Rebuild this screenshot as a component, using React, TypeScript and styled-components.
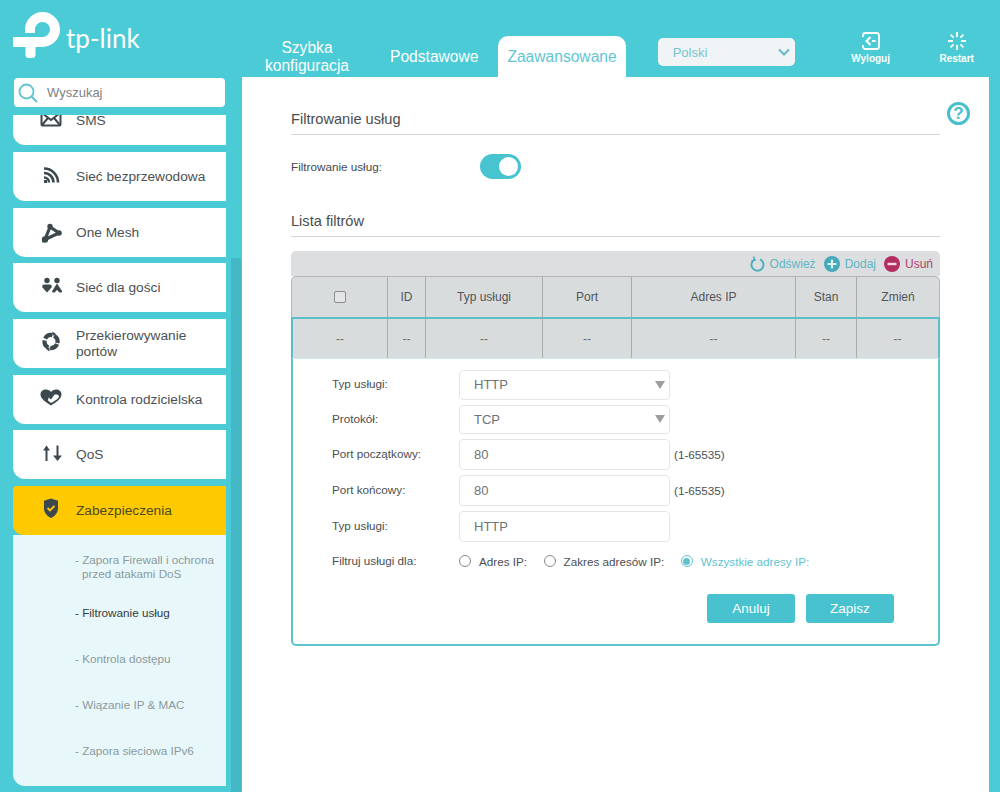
import React from 'react';
import styled, { createGlobalStyle } from 'styled-components';

const TEAL = '#4acbd6';
const DARK = '#3d484e';

const GlobalStyle = createGlobalStyle`
  html, body {
    margin: 0;
    padding: 0;
    background: ${TEAL};
    font-family: "Liberation Sans", Arial, sans-serif;
  }
  * { box-sizing: border-box; }
`;

const Page = styled.div`
  width: 1000px;
  height: 792px;
  overflow: hidden;
  background: ${TEAL};
`;

/* top bar */
const Header = styled.header`
  display: flex;
  height: 77px;
`;

const LogoArea = styled.div`
  align-items: flex-start;
  display: flex;
  flex: 0 0 244px;
  padding: 5px 0 0 12px;
`;

const LogoMark = styled.svg`
  display: block;
  flex: none;
`;

const LogoText = styled.span`
  color: #fff;
  font-family: Lato, sans-serif;
  font-size: 26px;
  line-height: 36px;
  margin: 15px 0 0 4px;
`;

const Nav = styled.nav`
  align-items: flex-end;
  display: flex;
  gap: 11px;
`;

const Tab = styled.div<{ $active?: boolean; $wide?: boolean }>`
  align-items: center;
  background: ${(p) => (p.$active ? '#fff' : 'transparent')};
  border-radius: 10px 10px 0 0;
  color: ${(p) => (p.$active ? '#62c6d2' : '#fff')};
  display: flex;
  font-size: 15.6px;
  height: 41px;
  justify-content: center;
  line-height: 18px;
  padding: 0 9px;
  text-align: center;
  width: ${(p) => (p.$wide ? '126px' : 'auto')};
`;

const LangSelect = styled.div`
  align-items: center;
  background: #f1f4f7;
  border-radius: 5px;
  color: #77c4cf;
  display: flex;
  font-size: 13px;
  height: 28px;
  justify-content: space-between;
  margin: 38px 0 0 32px;
  padding: 0 3px 0 15px;
  width: 137px;
`;

const HeaderActions = styled.div`
  display: flex;
  gap: 26px;
  margin: 31px 0 0 46px;
`;

const ActionButton = styled.div`
  align-items: center;
  color: #fff;
  display: flex;
  flex-direction: column;
  font-size: 10px;
  font-weight: 700;
  gap: 1px;
  line-height: 13px;
  width: 60px;
`;

/* body */
const Body = styled.div`
  display: flex;
  height: 715px;
`;

const Sidebar = styled.aside`
  flex: 0 0 242px;
  padding: 1px 0 0 13px;
`;

const SearchBox = styled.div`
  align-items: center;
  background: #fff;
  border-radius: 4px;
  color: #7f7f7f;
  display: flex;
  font-size: 13px;
  gap: 9px;
  height: 29px;
  margin: 0 0 8px 1px;
  padding-left: 4px;
  width: 211px;
`;

const SideRow = styled.div`
  display: flex;
  height: 677px;
`;

const MenuList = styled.div`
  display: flex;
  flex: 0 0 213px;
  flex-direction: column;
  gap: 6.67px;
  overflow: hidden;
`;

const MenuItem = styled.div<{ $active?: boolean; $clipped?: boolean }>`
  align-items: center;
  background: ${(p) => (p.$active ? '#ffc900' : '#fff')};
  border-radius: ${(p) => (p.$active ? '4px 0 0 10px' : '0 0 0 12px')};
  color: ${(p) => (p.$active ? '#4a4a2a' : '#4b5054')};
  display: flex;
  flex: none;
  font-size: 13.7px;
  gap: 14px;
  height: 49px;
  line-height: 16px;
  margin-top: ${(p) => (p.$clipped ? '-18.67px' : '0')};
  padding: 1px 0 0 27px;
`;

const MenuIcon = styled.svg`
  display: block;
  flex: none;
  overflow: visible;
`;

const SubMenu = styled.div`
  background: #e8f7fa;
  border-radius: 0 0 0 12px;
  flex: none;
  height: 251px;
  margin-top: -6.67px;
  padding: 9px 4px 0 62px;
`;

const SubItem = styled.div<{ $active?: boolean }>`
  align-items: center;
  color: ${(p) => (p.$active ? '#333a40' : '#8b9a9d')};
  display: flex;
  font-size: 11.7px;
  height: 46px;
  line-height: 14px;
  padding-left: 7px;
  text-indent: -7px;
`;

const ScrollThumb = styled.div`
  background: #43b7c5;
  flex: 0 0 10px;
  margin: 143px 0 0 5px;
`;

/* content */
const Content = styled.main`
  background: #fff;
  flex: 0 0 747px;
  padding: 32px 49px 0;
  position: relative;
`;

const HelpIcon = styled.div`
  align-items: center;
  border: 3px solid #47bfcc;
  border-radius: 50%;
  color: #47bfcc;
  display: flex;
  font-size: 17px;
  font-weight: 700;
  height: 23px;
  justify-content: center;
  position: absolute;
  right: 19px;
  top: 25px;
  width: 23px;
`;

const SectionTitle = styled.div`
  border-bottom: 1px solid #d4d6d6;
  color: #4a4d50;
  font-size: 14.6px;
  height: 26px;
  line-height: 20px;
`;

const SwitchRow = styled.div`
  align-items: center;
  color: #444a4f;
  display: flex;
  font-size: 11.7px;
  height: 25px;
  margin: 19px 0 32px;
`;

const SwitchLabel = styled.span`
  width: 189px;
`;

const Toggle = styled.div`
  align-items: center;
  background: #47c4d0;
  border-radius: 13px;
  display: flex;
  height: 25px;
  justify-content: flex-end;
  padding-right: 3px;
  width: 41px;
`;

const ToggleKnob = styled.div`
  background: #fff;
  border-radius: 50%;
  height: 19px;
  width: 19px;
`;

const TableToolbar = styled.div`
  align-items: center;
  background: #dcdedf;
  border-radius: 5px 5px 0 0;
  display: flex;
  font-size: 12px;
  height: 25px;
  justify-content: flex-end;
  margin-top: 14px;
  padding-right: 7px;
`;

const ToolButton = styled.span<{ $danger?: boolean }>`
  align-items: center;
  color: ${(p) => (p.$danger ? '#b03f6c' : '#5db7c4')};
  display: flex;
  gap: 5px;
  margin-left: 8px;
`;

const TableGrid = styled.div`
  display: grid;
  grid-template-columns: 97px 38px 117px 89px 164px 61px 83px;
  font-size: 12px;
`;

const HeadCell = styled.div<{ $first?: boolean; $last?: boolean }>`
  align-items: center;
  background: #d9dcdc;
  border-left: ${(p) => (p.$first ? '1px solid #b3b6b6' : 'none')};
  border-right: 1px solid ${(p) => (p.$last ? '#b3b6b6' : '#a9acac')};
  border-top: 1px solid #b3b6b6;
  border-radius: ${(p) => (p.$first ? '5px 0 0 0' : p.$last ? '0 5px 0 0' : '0')};
  color: #50565a;
  display: flex;
  height: 41px;
  justify-content: center;
`;

const RowCell = styled.div<{ $first?: boolean; $last?: boolean }>`
  align-items: center;
  background: #d9dcdc;
  border-top: 2px solid #5cbfc6;
  border-left: ${(p) => (p.$first ? '2px solid #5cbfc6' : 'none')};
  border-right: ${(p) => (p.$last ? '2px solid #5cbfc6' : '1px solid #a9acac')};
  color: #6a7073;
  display: flex;
  height: 41px;
  justify-content: center;
`;

const CheckBox = styled.div`
  background: #e4e6e6;
  border: 1px solid #8a8e90;
  border-radius: 2px;
  height: 12px;
  width: 12px;
`;

const FormPanel = styled.div`
  border: 2px solid #5cc5cc;
  border-top: 1px solid #cfe9ec;
  border-radius: 0 0 5px 5px;
  display: flex;
  flex-direction: column;
  gap: 5px;
  height: 288px;
  padding: 11px 44px 0 39px;
`;

const FormRow = styled.div`
  align-items: center;
  color: #4a4f53;
  display: flex;
  font-size: 11.7px;
`;

const FieldLabel = styled.label`
  flex: 0 0 127px;
  padding-bottom: 2px;
`;

const SelectBox = styled.div`
  align-items: center;
  border: 1px solid #e4e6e6;
  border-radius: 4px;
  color: #6e7376;
  display: flex;
  font-size: 13px;
  height: 29.5px;
  justify-content: space-between;
  padding: 0 4px 0 14px;
  width: 211px;
`;

const Arrow = styled.span`
  border-left: 5.5px solid transparent;
  border-right: 5.5px solid transparent;
  border-top: 8px solid #9a9ea0;
`;

const TextInput = styled.input`
  border: 1px solid #e4e6e6;
  border-radius: 4px;
  color: #6e7376;
  font-family: inherit;
  font-size: 13px;
  height: 31px;
  outline: none;
  padding: 0 14px;
  width: 211px;
`;

const Hint = styled.span`
  margin-left: 4px;
`;

const RadioRow = styled(FormRow)`
  height: 20px;
  margin-top: 4px;
`;

const RadioGroup = styled.div`
  display: flex;
  gap: 16.5px;
`;

const RadioOption = styled.span<{ $checked?: boolean }>`
  align-items: center;
  color: ${(p) => (p.$checked ? '#5fc3cf' : '#4a4f53')};
  display: flex;
  gap: 8px;
`;

const RadioDot = styled.span<{ $checked?: boolean }>`
  align-items: center;
  border: 1px solid ${(p) => (p.$checked ? '#5fc3cf' : '#85898c')};
  border-radius: 50%;
  display: flex;
  height: 12px;
  justify-content: center;
  width: 12px;

  &::after {
    background: #5fc3cf;
    border-radius: 50%;
    content: '';
    display: ${(p) => (p.$checked ? 'block' : 'none')};
    height: 7px;
    width: 7px;
  }
`;

const FormFooter = styled.div`
  display: flex;
  gap: 11px;
  justify-content: flex-end;
  margin-top: 18px;
`;

const PrimaryButton = styled.button`
  background: #47c2ce;
  border: none;
  border-radius: 3px;
  color: #fff;
  font-family: inherit;
  font-size: 13.5px;
  height: 29px;
  padding: 0;
  width: 88px;
`;

const Logo = () => (
  <LogoMark width="50" height="55" viewBox="12 5 50 55">
    <g fill="none" stroke="#fff" strokeWidth="10">
      <path d="M30 33V29.5A12.5 12.5 0 1 1 42.5 42H13" />
    </g>
    <path d="M25.5 42h10v12.5a3.5 3.5 0 0 1-3.5 3.5h-3a3.5 3.5 0 0 1-3.5-3.5z" fill="#fff" />
  </LogoMark>
);

const SmsIcon = () => (
  <MenuIcon width="22" height="22" viewBox="0 0 22 22" fill="none" stroke={DARK} strokeWidth="2">
    <rect x="1.5" y="1.5" width="19" height="14" rx="1" />
    <path d="M2 3l9 7 9-7M2 15l6-7M20 15l-6-7" />
  </MenuIcon>
);

const WifiIcon = () => (
  <MenuIcon width="22" height="22" viewBox="0 0 22 22" fill="none" stroke={DARK} strokeWidth="2.6">
    <path d="M4 11.500a5 5 0 0 1 5 5M4 7a9.500 9.500 0 0 1 9.500 9.500M4 2.500a14 14 0 0 1 14 14" />
    <rect x="4" y="14" width="3" height="3" fill={DARK} stroke="none" />
  </MenuIcon>
);

const MeshIcon = () => (
  <MenuIcon width="22" height="22" viewBox="0 0 22 22" fill={DARK}>
    <path d="M10 5L5 17.500 19 11z" fill="none" stroke={DARK} strokeWidth="3.200" />
    <circle cx="10" cy="4.500" r="2.700" />
    <circle cx="5" cy="17.500" r="3.200" />
    <circle cx="19" cy="11" r="2.700" />
  </MenuIcon>
);

const GuestIcon = () => (
  <MenuIcon width="22" height="22" viewBox="0 0 22 22" fill={DARK}>
    <circle cx="7" cy="3.500" r="2.700" />
    <circle cx="17" cy="3.500" r="2.700" />
    <path d="M7 15.500L2.500 10.500Q1.500 7.500 4.500 7.500H9.500Q12.500 7.500 11.500 10.500z" />
    <path d="M17 6.500L22 14Q22.300 15.500 21 15.500H19.500L17 13 14.500 15.500H13Q11.700 15.500 12.200 14z" />
  </MenuIcon>
);

const PortIcon = () => (
  <MenuIcon width="22" height="22" viewBox="0 0 22 22" fill="none">
    <g transform="translate(0 -2)">
      <circle cx="11" cy="10.500" r="6.500" stroke={DARK} strokeWidth="4.200" strokeDasharray="8.200 2" transform="rotate(22 11 10.500)" />
      <path d="M12.500 0.500l3.500 2.500-3.500 2zM9.500 20.500L6 18l3.500-2z" fill={DARK} />
    </g>
  </MenuIcon>
);

const HeartIcon = () => (
  <MenuIcon width="22" height="22" viewBox="0 0 22 22">
    <path d="M11 16.500C6 13 .5 10 .5 5.500.5 2 3 .5 6 .5c2 0 4 1 5 2.500 1-1.500 3-2.500 5-2.500 3 0 5.500 1.500 5.500 5 0 4.500-5.500 7.500-10.500 11z" fill={DARK} />
    <path d="M8.500 8.500l2.500 2 3.500-5h2c1.500 0 2.500 1 2.500 2 0 2-4.500 4.500-8 6.500-1-.7-2-1.500-3-2.500z" fill="#fff" />
  </MenuIcon>
);

const QosIcon = () => (
  <MenuIcon width="22" height="22" viewBox="0 0 22 22" fill={DARK}>
    <path d="M6.500 4.500v12.500" stroke={DARK} strokeWidth="2" />
    <path d="M6.500 1.500L10 6.500H3z" />
    <path d="M17.500 1.500v12" stroke={DARK} strokeWidth="2" />
    <path d="M17.500 17L13 11.500H22z" />
  </MenuIcon>
);

const ShieldIcon = () => (
  <MenuIcon width="22" height="22" viewBox="0 0 22 22">
    <path d="M11-1.500L18 .8v7.700c0 4.500-3.500 7.700-7 9.500-3.500-1.800-7-5-7-9.500V.8z" fill={DARK} />
    <path d="M7.500 8l2.500 2.500L14.500 6" fill="none" stroke="#ffc900" strokeWidth="1.800" />
  </MenuIcon>
);

const columns = ['ID', 'Typ usługi', 'Port', 'Adres IP', 'Stan', 'Zmień'];

const App: React.FC = () => (
  <Page>
    <GlobalStyle />
    <Header>
      <LogoArea>
        <Logo />
        <LogoText>tp-link</LogoText>
      </LogoArea>
      <Nav>
        <Tab $wide>
          Szybka
          <br />
          konfiguracja
        </Tab>
        <Tab>Podstawowe</Tab>
        <Tab $active>Zaawansowane</Tab>
      </Nav>
      <LangSelect>
        Polski
        <svg width="16" height="16" viewBox="0 0 16 16" fill="none" stroke="#6cbcc8" strokeWidth="2.200">
          <path d="M3 5.500l5 5 5-5" />
        </svg>
      </LangSelect>
      <HeaderActions>
        <ActionButton>
          <svg width="20" height="20" viewBox="0 0 20 20" fill="none" stroke="#fff" strokeWidth="1.800">
            <path d="M2 6V4.500A2.500 2.500 0 0 1 4.500 2h11A2.500 2.500 0 0 1 18 4.500v11a2.500 2.500 0 0 1-2.500 2.500h-11A2.500 2.500 0 0 1 2 15.500V14" />
            <path d="M9.500 6L5.500 10l4 4M11 10h3.500" strokeWidth="2" />
          </svg>
          Wyloguj
        </ActionButton>
        <ActionButton>
          <svg width="20" height="20" viewBox="0 0 20 20" fill="none" stroke="#fff" strokeWidth="1.800">
            <path d="M10 1v5M10 14v5M1 10h5M14 10h5M3.600 3.600l3 3M13.400 13.400l3 3M3.600 16.400l3-3M13.400 6.600l3-3" />
          </svg>
          Restart
        </ActionButton>
      </HeaderActions>
    </Header>
    <Body>
      <Sidebar>
        <SearchBox>
          <svg width="20" height="20" viewBox="0 0 20 20" fill="none" stroke="#62c4d0" strokeWidth="1.800">
            <circle cx="8.500" cy="8.500" r="7" />
            <path d="M13.500 13.500l5.500 5.500" strokeWidth="2.200" />
          </svg>
          Wyszukaj
        </SearchBox>
        <SideRow>
          <MenuList>
            <MenuItem $clipped>
              <SmsIcon />
              SMS
            </MenuItem>
            <MenuItem>
              <WifiIcon />
              Sieć bezprzewodowa
            </MenuItem>
            <MenuItem>
              <MeshIcon />
              One Mesh
            </MenuItem>
            <MenuItem>
              <GuestIcon />
              Sieć dla gości
            </MenuItem>
            <MenuItem>
              <PortIcon />
              <span>
                Przekierowywanie
                <br />
                portów
              </span>
            </MenuItem>
            <MenuItem>
              <HeartIcon />
              Kontrola rodzicielska
            </MenuItem>
            <MenuItem>
              <QosIcon />
              QoS
            </MenuItem>
            <MenuItem $active>
              <ShieldIcon />
              Zabezpieczenia
            </MenuItem>
            <SubMenu>
              <SubItem>
                <span>- Zapora Firewall i ochrona przed atakami DoS</span>
              </SubItem>
              <SubItem $active>
                <span>- Filtrowanie usług</span>
              </SubItem>
              <SubItem>
                <span>- Kontrola dostępu</span>
              </SubItem>
              <SubItem>
                <span>- Wiązanie IP &amp; MAC</span>
              </SubItem>
              <SubItem>
                <span>- Zapora sieciowa IPv6</span>
              </SubItem>
            </SubMenu>
          </MenuList>
          <ScrollThumb />
        </SideRow>
      </Sidebar>
      <Content>
        <HelpIcon>?</HelpIcon>
        <SectionTitle>Filtrowanie usług</SectionTitle>
        <SwitchRow>
          <SwitchLabel>Filtrowanie usług:</SwitchLabel>
          <Toggle>
            <ToggleKnob />
          </Toggle>
        </SwitchRow>
        <SectionTitle>Lista filtrów</SectionTitle>
        <TableToolbar>
          <ToolButton>
            <svg width="15" height="16" viewBox="0 0 15 16" fill="none" stroke="#4fb0be" strokeWidth="2">
              <path d="M4.500 3.500a6 6 0 1 0 5.500-.2" />
              <path d="M3.500 0.500l1.500 3.500-3.500 1" strokeWidth="1.600" />
            </svg>
            Odśwież
          </ToolButton>
          <ToolButton>
            <svg width="16" height="16" viewBox="0 0 16 16">
              <circle cx="8" cy="8" r="8" fill="#45a9b9" />
              <path d="M8 3.500v9M3.500 8h9" stroke="#dcf1f4" strokeWidth="2.200" />
            </svg>
            Dodaj
          </ToolButton>
          <ToolButton $danger>
            <svg width="16" height="16" viewBox="0 0 16 16">
              <circle cx="8" cy="8" r="8" fill="#b32e60" />
              <path d="M3.500 8h9" stroke="#f3dbe4" strokeWidth="2.400" />
            </svg>
            Usuń
          </ToolButton>
        </TableToolbar>
        <TableGrid>
          <HeadCell $first>
            <CheckBox />
          </HeadCell>
          {columns.map((name, index) => (
            <HeadCell key={name} $last={index === columns.length - 1}>
              {name}
            </HeadCell>
          ))}
          {['check', ...columns].map((name, index) => (
            <RowCell key={name} $first={index === 0} $last={index === columns.length}>
              --
            </RowCell>
          ))}
        </TableGrid>
        <FormPanel>
          <FormRow>
            <FieldLabel>Typ usługi:</FieldLabel>
            <SelectBox>
              HTTP
              <Arrow />
            </SelectBox>
          </FormRow>
          <FormRow>
            <FieldLabel>Protokół:</FieldLabel>
            <SelectBox>
              TCP
              <Arrow />
            </SelectBox>
          </FormRow>
          <FormRow>
            <FieldLabel>Port początkowy:</FieldLabel>
            <TextInput readOnly value="80" />
            <Hint>(1-65535)</Hint>
          </FormRow>
          <FormRow>
            <FieldLabel>Port końcowy:</FieldLabel>
            <TextInput readOnly value="80" />
            <Hint>(1-65535)</Hint>
          </FormRow>
          <FormRow>
            <FieldLabel>Typ usługi:</FieldLabel>
            <TextInput readOnly value="HTTP" />
          </FormRow>
          <RadioRow>
            <FieldLabel>Filtruj usługi dla:</FieldLabel>
            <RadioGroup>
              <RadioOption>
                <RadioDot />
                Adres IP:
              </RadioOption>
              <RadioOption>
                <RadioDot />
                Zakres adresów IP:
              </RadioOption>
              <RadioOption $checked>
                <RadioDot $checked />
                Wszystkie adresy IP:
              </RadioOption>
            </RadioGroup>
          </RadioRow>
          <FormFooter>
            <PrimaryButton>Anuluj</PrimaryButton>
            <PrimaryButton>Zapisz</PrimaryButton>
          </FormFooter>
        </FormPanel>
      </Content>
    </Body>
  </Page>
);

export default App;
